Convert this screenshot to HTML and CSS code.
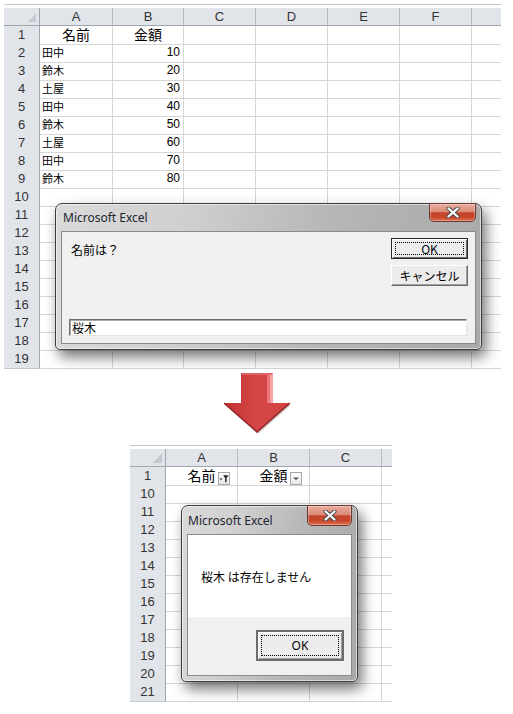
FILE: index.html
```html
<!DOCTYPE html>
<html lang="ja">
<head>
    <meta charset="UTF-8">
    <title>InputBox と MsgBox</title>
    <link rel="stylesheet" href="styles.css">
</head>
<body>
    <!-- 入力前のシート -->
    <div class="sheet sheet-top">
        <div class="row head"><div class="corner"></div><div>A</div><div>B</div><div>C</div><div>D</div><div>E</div><div>F</div><div></div></div>
        <div class="row"><div class="rh">1</div><div class="label">名前</div><div class="label">金額</div><div></div><div></div><div></div><div></div><div></div></div>
        <div class="row"><div class="rh">2</div><div>田中</div><div class="num">10</div><div></div><div></div><div></div><div></div><div></div></div>
        <div class="row"><div class="rh">3</div><div>鈴木</div><div class="num">20</div><div></div><div></div><div></div><div></div><div></div></div>
        <div class="row"><div class="rh">4</div><div>土屋</div><div class="num">30</div><div></div><div></div><div></div><div></div><div></div></div>
        <div class="row"><div class="rh">5</div><div>田中</div><div class="num">40</div><div></div><div></div><div></div><div></div><div></div></div>
        <div class="row"><div class="rh">6</div><div>鈴木</div><div class="num">50</div><div></div><div></div><div></div><div></div><div></div></div>
        <div class="row"><div class="rh">7</div><div>土屋</div><div class="num">60</div><div></div><div></div><div></div><div></div><div></div></div>
        <div class="row"><div class="rh">8</div><div>田中</div><div class="num">70</div><div></div><div></div><div></div><div></div><div></div></div>
        <div class="row"><div class="rh">9</div><div>鈴木</div><div class="num">80</div><div></div><div></div><div></div><div></div><div></div></div>
        <div class="row"><div class="rh">10</div><div></div><div></div><div></div><div></div><div></div><div></div><div></div></div>
        <div class="row"><div class="rh">11</div><div></div><div></div><div></div><div></div><div></div><div></div><div></div></div>
        <div class="row"><div class="rh">12</div><div></div><div></div><div></div><div></div><div></div><div></div><div></div></div>
        <div class="row"><div class="rh">13</div><div></div><div></div><div></div><div></div><div></div><div></div><div></div></div>
        <div class="row"><div class="rh">14</div><div></div><div></div><div></div><div></div><div></div><div></div><div></div></div>
        <div class="row"><div class="rh">15</div><div></div><div></div><div></div><div></div><div></div><div></div><div></div></div>
        <div class="row"><div class="rh">16</div><div></div><div></div><div></div><div></div><div></div><div></div><div></div></div>
        <div class="row"><div class="rh">17</div><div></div><div></div><div></div><div></div><div></div><div></div><div></div></div>
        <div class="row"><div class="rh">18</div><div></div><div></div><div></div><div></div><div></div><div></div><div></div></div>
        <div class="row"><div class="rh">19</div><div></div><div></div><div></div><div></div><div></div><div></div><div></div></div>

        <div class="dialog dialog-input">
            <div class="dialog-title">
                <span>Microsoft Excel</span>
                <div class="close-btn">
                    <svg width="14" height="11" viewBox="0 0 14 11"><path d="M2.5 1.5 L11.5 9.5 M11.5 1.5 L2.5 9.5" stroke="#4b4b4b" stroke-width="4.2" stroke-linecap="round"/><path d="M2.5 1.5 L11.5 9.5 M11.5 1.5 L2.5 9.5" stroke="#fff" stroke-width="2.2" stroke-linecap="round"/></svg>
                </div>
            </div>
            <div class="dialog-client input-client">
                <div class="prompt">名前は？</div>
                <div class="btn-col">
                    <button class="btn default">OK</button>
                    <button class="btn">キャンセル</button>
                </div>
                <input class="prompt-input" type="text" value="桜木">
            </div>
        </div>
    </div>

    <div class="arrow">
        <svg width="66" height="61" viewBox="0 0 66 61">
            <defs>
                <linearGradient id="arrowFill" x1="0" y1="0" x2="1" y2="0">
                    <stop offset="0" stop-color="#c23434"/>
                    <stop offset="0.55" stop-color="#d64848"/>
                    <stop offset="1" stop-color="#cf4040"/>
                </linearGradient>
            </defs>
            <polygon points="1,32 34,61 67,32" fill="rgba(0,0,0,0.18)"/>
            <polygon points="17,0 49,0 49,30 66,30 33,59 0,30 17,30" fill="url(#arrowFill)"/>
            <polygon points="43,1 49,0 49,30 43,30" fill="#ec7676"/>
            <polygon points="46,1 49,0 49,30 46,30" fill="#f7a3a3"/>
            <polygon points="17,0 49,0 47,2 19,2" fill="#e26363"/>
            <polyline points="0,30 33,59 66,30" fill="none" stroke="#962424" stroke-width="1.5"/>
        </svg>
    </div>

    <!-- フィルター後のシート -->
    <div class="sheet sheet-bottom">
        <div class="row head"><div class="corner"></div><div>A</div><div>B</div><div>C</div><div></div></div>
        <div class="row">
            <div class="rh">1</div>
            <div class="label">名前
                <span class="filter-btn">
                    <svg width="11" height="11" viewBox="0 0 11 11"><path d="M0.5 5.5 L4 5.5 L2.25 7.5 Z" fill="#333"/><path d="M4.5 2 L10.5 2 L8.3 5 L8.3 9.5 L6.7 9.5 L6.7 5 Z" fill="#222"/></svg>
                </span>
            </div>
            <div class="label">金額
                <span class="filter-btn">
                    <svg width="11" height="11" viewBox="0 0 11 11"><path d="M2.5 4.5 L8.5 4.5 L5.5 7.5 Z" fill="#555"/></svg>
                </span>
            </div>
            <div></div><div></div>
        </div>
        <div class="row"><div class="rh">10</div><div></div><div></div><div></div><div></div></div>
        <div class="row"><div class="rh">11</div><div></div><div></div><div></div><div></div></div>
        <div class="row"><div class="rh">12</div><div></div><div></div><div></div><div></div></div>
        <div class="row"><div class="rh">13</div><div></div><div></div><div></div><div></div></div>
        <div class="row"><div class="rh">14</div><div></div><div></div><div></div><div></div></div>
        <div class="row"><div class="rh">15</div><div></div><div></div><div></div><div></div></div>
        <div class="row"><div class="rh">16</div><div></div><div></div><div></div><div></div></div>
        <div class="row"><div class="rh">17</div><div></div><div></div><div></div><div></div></div>
        <div class="row"><div class="rh">18</div><div></div><div></div><div></div><div></div></div>
        <div class="row"><div class="rh">19</div><div></div><div></div><div></div><div></div></div>
        <div class="row"><div class="rh">20</div><div></div><div></div><div></div><div></div></div>
        <div class="row"><div class="rh">21</div><div></div><div></div><div></div><div></div></div>

        <div class="dialog dialog-msg">
            <div class="dialog-title">
                <span>Microsoft Excel</span>
                <div class="close-btn">
                    <svg width="14" height="11" viewBox="0 0 14 11"><path d="M2.5 1.5 L11.5 9.5 M11.5 1.5 L2.5 9.5" stroke="#4b4b4b" stroke-width="4.2" stroke-linecap="round"/><path d="M2.5 1.5 L11.5 9.5 M11.5 1.5 L2.5 9.5" stroke="#fff" stroke-width="2.2" stroke-linecap="round"/></svg>
                </div>
            </div>
            <div class="dialog-client msg-client">
                <div class="msg-text">桜木 は存在しません</div>
                <div class="msg-footer">
                    <button class="btn default big">OK</button>
                </div>
            </div>
        </div>
    </div>
</body>
</html>
```
FILE: styles.css
```css
* {
    box-sizing: border-box;
}

body {
    margin: 0;
    width: 513px;
    height: 714px;
    overflow: hidden;
    background: #fff;
    font-family: "Noto Sans CJK JP", sans-serif;
    color: #000;
}

/* シート */
.sheet {
    position: relative;
    border-top: 1px solid #c4c8cd;
    padding-top: 3px;
}

.sheet-top {
    margin: 4px 0 0 4px;
    width: 497px;
    --cols: 36px 73px 71px 72px 72px 72px 72px 29px;
}

.sheet-bottom {
    margin-left: 130px;
    width: 262px;
    --cols: 36px 72px 72px 72px 10px;
}

.row {
    display: grid;
    grid-template-columns: var(--cols);
    height: 18px;
}

.row > div {
    position: relative;
    border-right: 1px solid #d6d6d6;
    border-bottom: 1px solid #d6d6d6;
    padding: 0 2px;
    font-size: 11px;
    line-height: 17px;
    white-space: nowrap;
}

.row > div:last-child {
    border-right: none;
}

.row.head > div {
    background: #e1e5ea;
    border-right-color: #b5bcc4;
    border-bottom-color: #9ea6b0;
    color: #333;
    font: 13px/17px "Liberation Sans", sans-serif;
    text-align: center;
}

.row.head > div:last-child {
    border-right: none;
}

.row > .rh {
    background: #e1e5ea;
    border-right-color: #9ea6b0;
    border-bottom-color: #c3c9d0;
    color: #333;
    font: 13px/18px "Liberation Sans", sans-serif;
    text-align: center;
}

.row.head > .corner {
    border-right-color: #9ea6b0;
    background: #e1e5ea linear-gradient(135deg, transparent 50%, #c5cad0 50%) no-repeat right 3px bottom 3px / 9px 9px;
}

.row > .label {
    font-size: 14px;
    line-height: 17px;
    text-align: center;
}

.row > .num {
    font: 12px/17px "Liberation Sans", sans-serif;
    text-align: right;
    padding-right: 3px;
}

.filter-btn {
    position: absolute;
    right: 7px;
    bottom: 0;
    width: 12px;
    height: 13px;
    border: 1px solid #a3a8ae;
    background: linear-gradient(#fdfdfd, #e6e8eb);
    display: flex;
    align-items: center;
    justify-content: center;
}

/* ダイアログ */
.dialog {
    position: absolute;
    display: flex;
    flex-direction: column;
    padding: 0 5px 5px;
    border: 1px solid #3e3e3e;
    border-radius: 7px 7px 5px 5px;
    background: linear-gradient(100deg, #dadada 0%, #cfcfcf 30%, #b6b6b6 62%, #a9a9a9 100%);
    box-shadow: inset 0 0 0 1px rgba(255,255,255,0.55), 4px 7px 14px rgba(0,0,0,0.55);
}

.dialog-input {
    left: 51px;
    top: 198px;
    width: 427px;
    height: 147px;
}

.dialog-msg {
    left: 51px;
    top: 59px;
    width: 177px;
    height: 177px;
}

.dialog-title {
    position: relative;
    height: 27px;
    flex: none;
    display: flex;
    align-items: center;
    padding-left: 2px;
    font: 12px "Noto Sans", sans-serif;
    color: #1c2530;
}

.dialog-msg .dialog-title {
    height: 28px;
    padding-left: 1px;
}

.close-btn {
    position: absolute;
    top: -1px;
    right: 0;
    width: 47px;
    height: 19px;
    border: 1px solid #6a3a33;
    border-radius: 0 0 5px 5px;
    background: linear-gradient(#e9ab9c 0%, #dc8b78 45%, #c2452b 52%, #c8472c 78%, #e27150 100%);
    box-shadow: inset 0 0 0 1px rgba(255,255,255,0.3);
    display: flex;
    align-items: center;
    justify-content: center;
}

.dialog-msg .close-btn {
    width: 45px;
    height: 21px;
}

.dialog-client {
    flex: 1;
    border: 1px solid #8a8a8a;
    background: #f0f0f0;
}

.input-client {
    display: grid;
    grid-template-columns: 1fr 77px;
    grid-template-rows: auto 1fr 17px;
    padding: 6px 7px 7px 7px;
}

.prompt {
    grid-column: 1;
    grid-row: 1;
    font-size: 12px;
    line-height: 16px;
    margin: 4px 0 0 2px;
}

.btn-col {
    grid-column: 2;
    grid-row: 1 / 3;
    display: flex;
    flex-direction: column;
    gap: 6px;
}

.btn {
    position: relative;
    height: 21px;
    padding: 0;
    font: 12px "Noto Sans CJK JP", sans-serif;
    color: #000;
    background: #ececec;
    border: 1px solid;
    border-color: #fff #6a6a6a #6a6a6a #fff;
    box-shadow: inset -1px -1px #a0a0a0;
}

.btn.default {
    border-color: #2a2a2a;
    box-shadow: inset 1px 1px #fff, inset -1px -1px #6a6a6a;
}

.btn.default::after {
    content: "";
    position: absolute;
    inset: 3px;
    border: 1px dotted #000;
}

.btn.big {
    width: 88px;
    height: 31px;
    font: 12px "Noto Sans", sans-serif;
    border: 2px solid #6c6c6c;
    box-shadow: inset 1px 1px #fff, inset -1px -1px #a0a0a0;
}

.btn.big::after {
    inset: 3px;
}

.prompt-input {
    grid-column: 1 / 3;
    grid-row: 3;
    width: 398px;
    height: 17px;
    margin: 0;
    padding: 0 2px;
    font: 12px "Noto Sans CJK JP", sans-serif;
    border: 1px solid;
    border-color: #6e6e6e #e3e3e3 #e3e3e3 #6e6e6e;
    box-shadow: inset 1px 1px #a8a8a8;
    background: #fff;
    outline: none;
}

.msg-client {
    display: flex;
    flex-direction: column;
}

.msg-text {
    height: 82px;
    flex: none;
    display: flex;
    align-items: center;
    padding-left: 13px;
    background: #fff;
    font-size: 12px;
}

.msg-footer {
    flex: 1;
    display: flex;
    justify-content: flex-end;
    align-items: flex-start;
    padding: 13px 7px 0 0;
}

/* 矢印 */
.arrow {
    display: flex;
    justify-content: center;
    margin: 5px 0 11px;
    padding-left: 1px;
}

.arrow svg {
    display: block;
}
```
